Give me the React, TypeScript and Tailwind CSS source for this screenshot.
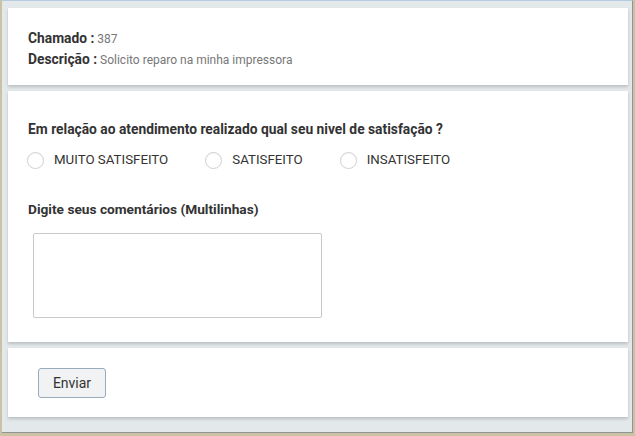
import React from "react";

function Radio({ label }: { label: string }) {
  return (
    <label className="flex items-center">
      <span className="w-[17px] h-[17px] rounded-full border border-[#cfcfcf] bg-white shadow-[inset_0_1px_1px_rgba(0,0,0,0.04)]" />
      <span className="ml-[10px] text-[13.3px] leading-[20px] text-[#333]">{label}</span>
    </label>
  );
}

export default function App() {
  return (
    <div
      className="w-[635px] h-[436px] bg-[#cbc2a6] flex pl-[2px] pr-[2px] pb-[3px]"
      style={{ fontFamily: "Roboto, 'Liberation Sans', sans-serif" }}
    >
      <div className="flex-1 flex flex-col gap-[6px] bg-[#e3e8eb] border-t border-t-[#b4cbe2] border-r border-b border-r-[#8f9595] border-b-[#8f9595] pt-[7px] pl-[6px] pr-[4px]">
        {/* Card 1 */}
        <div className="h-[77px] bg-white shadow-[0_2px_3px_rgba(0,0,0,0.18)] pt-[20px] pl-[20px] leading-[19px]">
          <div>
            <span className="text-[13.8px] font-bold text-[#333]">Chamado :</span>
            <span className="text-[12px] text-[#777]"> 387</span>
          </div>
          <div>
            <span className="text-[13.8px] font-bold text-[#333]">Descrição :</span>
            <span className="text-[12px] text-[#777]"> Solicito reparo na minha impressora</span>
          </div>
        </div>

        {/* Card 2 */}
        <div className="h-[251px] bg-white shadow-[0_2px_3px_rgba(0,0,0,0.18)] pt-[29px] pl-[20px] flex flex-col items-start">
          <div className="text-[13.8px] leading-[19px] font-bold text-[#333]">
            Em relação ao atendimento realizado qual seu nivel de satisfação ?
          </div>
          <div className="flex items-center mt-[11px] ml-[-1px] gap-[37px]">
            <Radio label="MUITO SATISFEITO" />
            <Radio label="SATISFEITO" />
            <Radio label="INSATISFEITO" />
          </div>
          <div className="mt-[30px] text-[13.7px] leading-[19px] font-bold text-[#333]">
            Digite seus comentários (Multilinhas)
          </div>
          <textarea className="mt-[14px] ml-[5px] w-[289px] h-[85px] border border-[#c9c9c9] rounded-[2px] resize-none outline-none" />
        </div>

        {/* Card 3 */}
        <div className="h-[69px] bg-white shadow-[0_2px_3px_rgba(0,0,0,0.18)] pt-[20px] pl-[30px]">
          <button className="w-[68px] h-[30px] bg-[#f1f2f3] border border-[#9aabbb] rounded-[3px] text-[14px] text-[#333]">
            Enviar
          </button>
        </div>
      </div>
    </div>
  );
}
